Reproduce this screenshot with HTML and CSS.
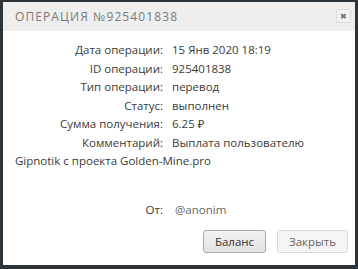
FILE: index.html
```html
<!DOCTYPE html>
<html>
<head>
<meta charset="utf-8">
<link rel="stylesheet" href="styles.css">
</head>
<body>
<div class="modal">
  <div class="modal-header">
    <div class="title">Операция №925401838</div>
    <div class="close">✖</div>
  </div>
  <div class="modal-body">
    <div class="row"><span class="label">Дата операции:</span><span class="value">15 Янв 2020 18:19</span></div>
    <div class="row"><span class="label">ID операции:</span><span class="value">925401838</span></div>
    <div class="row"><span class="label">Тип операции:</span><span class="value">перевод</span></div>
    <div class="row"><span class="label">Статус:</span><span class="value">выполнен</span></div>
    <div class="row"><span class="label">Сумма получения:</span><span class="value">6.25 ₽</span></div>
    <div class="row"><span class="label">Комментарий:</span><span class="value">Выплата пользователю</span><br><span class="value">Gipnotik с проекта Golden-Mine.pro</span></div>
    <div class="row from"><span class="label">От:</span><span class="value anon">@anonim</span></div>
  </div>
  <div class="modal-footer">
    <button class="btn btn-primary">Баланс</button>
    <button class="btn btn-light">Закрыть</button>
  </div>
</div>
</body>
</html>
```
FILE: styles.css
```css
html, body {
  margin: 0;
  padding: 0;
  background: #2c3439;
  height: 269px;
  overflow: hidden;
}
body {
  padding: 2px 3px 4px 3px;
  box-sizing: border-box;
  font-family: "Open Sans", "Noto Sans", sans-serif;
}
.modal {
  background: #fff;
  height: 263px;
  width: 352px;
  display: flex;
  flex-direction: column;
}
.modal-header {
  height: 29px;
  background: #eeeeee;
  display: flex;
  align-items: center;
  justify-content: space-between;
  padding: 0 4px 0 12px;
}
.title {
  text-transform: uppercase;
  color: #7a7a7a;
  font-size: 12px;
  letter-spacing: 1.1px;
}
.close {
  width: 13px;
  height: 12px;
  border: 1px solid #dcdcdc;
  border-radius: 2px;
  background: #f2f2f2;
  color: #6e6e6e;
  font-size: 8px;
  line-height: 12px;
  text-align: center;
  margin-top: -2px;
}
.modal-body {
  padding: 10px 8px 0 12px;
  color: #3a3a3a;
  font-size: 11.5px;
  line-height: 18.5px;
}
.label {
  display: inline-block;
  width: 148px;
  text-align: right;
  margin-right: 9px;
}
.from {
  margin-top: 30px;
}
.anon {
  color: #666;
  margin-left: 3px;
}
.modal-footer {
  display: flex;
  justify-content: flex-end;
  gap: 11px;
  padding: 11px 7px 0 0;
}
.btn {
  font-family: "Open Sans", "Noto Sans", sans-serif;
  font-size: 11.5px;
  height: 23px;
  border-radius: 3px;
  padding: 0;
}
.btn-primary {
  width: 63px;
  border: 1px solid #a9a9a9;
  background: linear-gradient(#f2f2f2, #e2e2e2);
  color: #333;
}
.btn-light {
  width: 71px;
  border: 1px solid #dadada;
  background: #f4f4f4;
  color: #666;
}
```
